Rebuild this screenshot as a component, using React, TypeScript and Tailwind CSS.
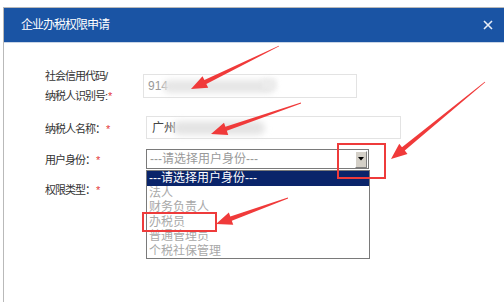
import React from "react";

type Arrow = { tx: number; ty: number; hx: number; hy: number };

const arrows: Arrow[] = [
    { tx: 279, ty: 46, hx: 191, hy: 89 },
    { tx: 301, ty: 103, hx: 211, hy: 134 },
    { tx: 485, ty: 82, hx: 391, hy: 159 },
    { tx: 288, ty: 198, hx: 216, hy: 224 },
];

// tapered arrow: thin tail, wide head
const arrowPoints = ({ tx, ty, hx, hy }: Arrow) => {
    const dx = hx - tx;
    const dy = hy - ty;
    const len = Math.hypot(dx, dy);
    const ux = dx / len;
    const uy = dy / len;
    const px = -uy;
    const py = ux;
    const headLen = 16;
    const bx = hx - ux * headLen;
    const by = hy - uy * headLen;
    const pts: [number, number][] = [
        [tx + px * 0.4, ty + py * 0.4],
        [bx + px * 2.2, by + py * 2.2],
        [bx + px * 6.5, by + py * 6.5],
        [hx, hy],
        [bx - px * 6.5, by - py * 6.5],
        [bx - px * 2.2, by - py * 2.2],
        [tx - px * 0.4, ty - py * 0.4],
    ];
    return pts.map((p) => p.join(",")).join(" ");
};

const options = ["法人", "财务负责人", "办税员", "普通管理员", "个税社保管理"];

const font = { fontFamily: '"Liberation Sans", "Noto Sans CJK SC", sans-serif' };

const Label = ({ children }: { children: React.ReactNode }) => (
    <span className="text-[11px] tracking-[-1px] text-[#333]">
        {children}
        <span className="text-[#e4393c] ml-[1px]">*</span>
    </span>
);

export default function App() {
    return (
        <div className="relative w-[504px] h-[302px] overflow-hidden bg-white" style={font}>
            <div className="pt-[7px] pl-[3px] h-full">
                <div className="h-full border-l border-t border-[#b9b9b9] bg-white">
                    {/* header */}
                    <div className="h-[34px] bg-[#1a54a4] flex items-center justify-between pl-[17px] pr-[10px]">
                        <span className="text-[12px] tracking-[-1px] text-white">企业办税权限申请</span>
                        <svg width="10" height="10" viewBox="0 0 10 10" className="mr-[1px]">
                            <path d="M1 1 L9 9 M9 1 L1 9" stroke="#e8eef7" strokeWidth="1.6" />
                        </svg>
                    </div>
                    <div className="h-[1px] bg-[#c9d5e6]" />

                    {/* form */}
                    <div className="pl-[41px] pt-[23px] flex flex-col">
                        <div className="flex items-center h-[40px]">
                            <div className="w-[98px] flex flex-col leading-[20px] text-[11px] tracking-[-1px] text-[#333]">
                                <span>社会信用代码/</span>
                                <Label>纳税人识别号:</Label>
                            </div>
                            <div className="relative w-[214px] h-[24px] border border-[#e3e3e3] flex items-center pl-[4px] text-[12px] text-[#999]">
                                914
                                <div className="absolute left-[19px] top-[5px] w-[112px] h-[13px] rounded-full bg-[#e6e6e6] blur-[3px]" />
                                <div className="absolute left-[118px] top-[4px] w-[14px] h-[10px] bg-[#ececec] blur-[2px]" />
                            </div>
                        </div>

                        <div className="flex items-center h-[23px] mt-[10px]">
                            <div className="w-[101px]">
                                <Label>纳税人名称：</Label>
                            </div>
                            <div className="relative w-[255px] h-[23px] border border-[#e3e3e3] flex items-center pl-[5px] text-[12px] text-[#444]">
                                广州
                                <div className="absolute left-[26px] top-[4px] w-[92px] h-[14px] rounded-full bg-[#e4e4e4] blur-[3px]" />
                            </div>
                        </div>

                        <div className="flex items-center h-[20px] mt-[10px]">
                            <div className="w-[101px]">
                                <Label>用户身份：</Label>
                            </div>
                            <div className="w-[223px] h-[20px] border border-[#7a7a7a] flex items-center justify-between pl-[3px] pr-[1px] text-[12px] text-[#999]">
                                <span>---请选择用户身份---</span>
                                <div className="w-[12px] h-[17px] bg-[#d4d0c8] border-t border-l border-t-white border-l-white border-r border-b border-r-[#808080] border-b-[#808080] flex items-center justify-center">
                                    <svg width="6" height="4" viewBox="0 0 6 4">
                                        <path d="M0 0 H6 L3 3.5 Z" fill="#000" />
                                    </svg>
                                </div>
                            </div>
                        </div>

                        <div className="flex items-center h-[20px] mt-[11px]">
                            <Label>权限类型：</Label>
                        </div>
                    </div>
                </div>
            </div>

            {/* open select list */}
            <div className="absolute left-[146px] top-[170px] w-[224px] h-[89px] bg-white border border-[#7a7a7a] text-[12px] leading-[14.5px]">
                <div className="h-[14.5px] bg-[#0a246a] text-white pl-[2px] whitespace-nowrap">---请选择用户身份---</div>
                {options.map((o) => (
                    <div key={o} className="h-[14.5px] text-[#a8a8a8] pl-[2px]">
                        {o}
                    </div>
                ))}
            </div>

            {/* annotations */}
            <div className="absolute left-[337px] top-[143px] w-[49px] h-[36px] border-2 border-[#ee3b3b]" />
            <div className="absolute left-[142px] top-[212px] w-[75px] h-[20px] border-2 border-[#ee3b3b]" />
            <svg className="absolute inset-0 pointer-events-none" width="504" height="302">
                {arrows.map((a, i) => (
                    <polygon key={i} points={arrowPoints(a)} fill="#f03a3a" />
                ))}
            </svg>
        </div>
    );
}
